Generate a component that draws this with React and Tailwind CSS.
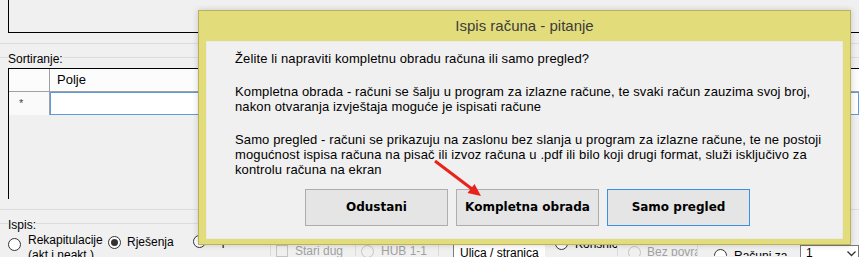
import React from 'react';

const Radio = ({ checked, disabled }) => (
  <span
    className={`flex w-[13px] h-[13px] shrink-0 items-center justify-center rounded-full border ${
      disabled ? 'border-[#c4c4c4] bg-[#f0f0f0]' : 'border-[#333333] bg-white'
    }`}
  >
    {checked && <span className="w-[7px] h-[7px] rounded-full bg-[#333333]" />}
  </span>
);

const GroupLabel = ({ children }) => (
  <div className="flex items-start h-[24px]">
    <div className="w-[8px] mt-[13px] h-px bg-[#dcdcdc]" />
    <span className="mt-[7px] leading-[16px] text-[12px]">{children}</span>
    <div className="flex-1 mt-[13px] h-px bg-[#dcdcdc]" />
  </div>
);

const DialogButton = ({ children, focused }) => (
  <button
    className={`w-[143px] h-[37px] border bg-[#e5e5e5] font-['DejaVu_Sans',sans-serif] font-bold text-[12px] text-black ${
      focused ? 'border-[#3c8fe4]' : 'border-[#adadad]'
    }`}
  >
    {children}
  </button>
);

const Form = () => (
  <div className="flex flex-col">
    <div className="h-[33px] ml-[8px] border-l border-b border-black" />
    <div className="mt-[10px] h-px bg-[#dcdcdc]" />
    <GroupLabel>Sortiranje:</GroupLabel>

    <div className="ml-[8px] h-[131px] border-l border-t border-black">
      <div className="flex h-[23px] text-[13px]">
        <div className="w-[41px] bg-[#fcfcfc] border-r border-b border-[#a0a0a0]" />
        <div className="flex-1 bg-[#fcfcfc] border-b border-[#a0a0a0] pl-[7px] leading-[22px]">Polje</div>
      </div>
      <div className="flex h-[23px]">
        <div className="w-[41px] bg-[#fafafa] border-r border-[#a0a0a0] flex items-center pl-[10px] text-[11px] text-[#444]">*</div>
        <div className="flex-1 bg-white border border-[#5d9bdc]" />
      </div>
    </div>

    <div className="mt-[10px] h-px bg-[#dcdcdc]" />

    <div className="flex text-[12px] h-[46px] whitespace-nowrap">
      <div className="w-[270px] flex flex-col">
        <GroupLabel>Ispis:</GroupLabel>
        <div className="flex pl-[8px]">
          <div className="w-[100px] flex items-start gap-[7px]">
            <span className="mt-[5px]"><Radio /></span>
            <span className="leading-[15px]">Rekapitulacije<br />(akt i neakt.)</span>
          </div>
          <div className="w-[85px] flex items-start gap-[6px]">
            <span className="mt-[3px]"><Radio checked /></span>
            <span className="leading-[18px]">Rješenja</span>
          </div>
          <div className="flex items-start gap-[7px]">
            <span className="mt-[2px]"><Radio /></span>
            <span className="leading-[16px]">Uplatnice</span>
          </div>
        </div>
      </div>

      <div className="w-[85px] border-l border-[#dcdcdc] pl-[5px] pt-[35px] flex items-start gap-[7px] text-[#a0a0a0]">
        <span className="w-[12px] h-[12px] border border-[#c4c4c4] bg-[#f0f0f0]" />
        <span className="leading-[13px]">Stari dug</span>
      </div>

      <div className="w-[83px] border-l border-[#dcdcdc] pl-[5px] pt-[35px] flex items-start gap-[7px] text-[#a0a0a0]">
        <Radio disabled />
        <span className="leading-[13px]">HUB 1-1</span>
      </div>

      <div className="w-[107px] border-l border-[#dcdcdc] pl-[14px] pt-[34px]">
        <div className="h-[14px] bg-white border-l border-t border-[#7a7a7a] pl-[6px] leading-[16px]">Ulica / stranica</div>
      </div>

      <div className="w-[72px] pl-[10px] pt-[27px] flex items-start gap-[7px] overflow-hidden">
        <Radio />
        <span className="leading-[14px]">Korisnici</span>
      </div>

      <div className="w-[80px] border-l border-[#dcdcdc] pl-[10px] pt-[36px] flex items-start gap-[6px] text-[#a0a0a0] overflow-hidden">
        <Radio disabled />
        <span className="leading-[13px]">Bez povrata</span>
      </div>

      <div className="w-[101px] border-l border-[#dcdcdc] pl-[16px] pt-[39px] flex items-start gap-[7px] overflow-hidden">
        <Radio />
        <span className="leading-[14px]">Računi za</span>
      </div>

      <div className="flex-1 pt-[35px] pl-[2px]">
        <div className="h-[20px] bg-white border border-[#7a7a7a] flex items-start justify-between pl-[5px] pr-[2px] leading-[14px]">
          <span>1</span>
          <svg width="9" height="6" viewBox="0 0 9 6" className="mt-[5px]">
            <path d="M0.5 0.5 L4.5 4.5 L8.5 0.5" fill="none" stroke="#333" strokeWidth="1.3" />
          </svg>
        </div>
      </div>
    </div>
  </div>
);

const Dialog = () => (
  <div className="absolute left-[198px] top-[10px] w-[653px] h-[235px] bg-[#e3dc7b] border border-[#bab35c] shadow-[0_0_6px_rgba(0,0,0,0.18)] flex flex-col">
    <div className="h-[30px] flex items-center justify-center text-[15px] text-[#3c3c3c]">
      Ispis računa - pitanje
    </div>
    <div className="mx-[7px] h-[198px] bg-[#f0f0f0] border border-[#e9e9e9] pl-[28px] pt-[9px] text-[13px] leading-[15px] tracking-[0.12px] text-black">
      <p>Želite li napraviti kompletnu obradu računa ili samo pregled?</p>
      <p className="mt-[18px]">
        Kompletna obrada - računi se šalju u program za izlazne račune, te svaki račun zauzima svoj broj,<br />
        nakon otvaranja izvještaja moguće je ispisati račune
      </p>
      <p className="mt-[18px]">
        Samo pregled - računi se prikazuju na zaslonu bez slanja u program za izlazne račune, te ne postoji<br />
        mogućnost ispisa računa na pisač ili izvoz računa u .pdf ili bilo koji drugi format, služi isključivo za<br />
        kontrolu računa na ekran
      </p>
      <div className="mt-[12px] ml-[70px] flex gap-[8px] tracking-normal">
        <DialogButton>Odustani</DialogButton>
        <DialogButton>Kompletna obrada</DialogButton>
        <DialogButton focused>Samo pregled</DialogButton>
      </div>
    </div>
  </div>
);

const Arrow = () => (
  <svg className="absolute left-0 top-0 pointer-events-none" width="859" height="257" viewBox="0 0 859 257">
    <line x1="435" y1="161" x2="472" y2="189" stroke="#e8231b" strokeWidth="3" />
    <polygon points="481,196 467.5,193 474.5,184" fill="#e8231b" />
  </svg>
);

export default function App() {
  return (
    <div className="relative w-[859px] h-[257px] overflow-hidden bg-[#f0f0f0] font-['Liberation_Sans',Arial,sans-serif] text-black">
      <Form />
      <Dialog />
      <Arrow />
    </div>
  );
}
